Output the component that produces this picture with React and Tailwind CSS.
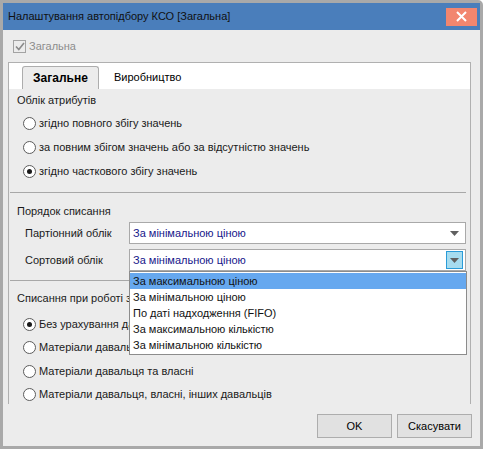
import { useState } from "react"

const Radio = ({ checked, label }) => (
  <div className="flex items-center gap-[3px]">
    <span className="w-[13px] h-[13px] rounded-full border border-[#5c5c5c] bg-white flex items-center justify-center shrink-0">
      {checked && <span className="w-[5px] h-[5px] rounded-full bg-[#1a1a1a]" />}
    </span>
    <span className="whitespace-nowrap">{label}</span>
  </div>
)

const Arrow = () => (
  <svg width="9" height="5" viewBox="0 0 9 5">
    <path d="M0 0 H9 L4.5 5 Z" fill="#606060" />
  </svg>
)

const Select = ({ value, focused, children }) => (
  <div className="relative w-[337px] h-[22px] border border-[#a9a9a9] bg-white flex items-center justify-between pl-[3px] pr-[2px]">
    <span className="text-[#16168a]">{value}</span>
    <span
      className={`w-[17px] h-[18px] flex items-center justify-center ${
        focused ? "bg-[#a6dcef] border border-[#2a9bd8]" : ""
      }`}
    >
      <Arrow />
    </span>
    {children}
  </div>
)

const listItems = [
  "За максимальною ціною",
  "За мінімальною ціною",
  "По даті надходження (FIFO)",
  "За максимальною кількістю",
  "За мінімальною кількістю",
]

export default function App() {
  const [tab, setTab] = useState("general")

  return (
    <div className="w-[487px] h-[451px] bg-white text-[11px] text-[#1a1a1a] font-['Liberation_Sans','Arial',sans-serif]">
      <div className="w-[483px] h-[449px] border-[3px] border-[#a9a9a9] rounded-tr-[5px] bg-[#ececec] flex flex-col">
        {/* Title bar */}
        <div className="h-[27px] shrink-0 bg-[#4a7ebb] flex items-center justify-between pl-[5px] pr-[3px]">
          <span className="text-[#111]">Налаштування автопідбору КСО [Загальна]</span>
          <button className="w-[31px] h-[18px] bg-[#f2866f] flex items-center justify-center">
            <svg width="11" height="11" viewBox="0 0 11 11">
              <path d="M1 1 L10 10 M10 1 L1 10" stroke="white" strokeWidth="2" />
            </svg>
          </button>
        </div>

        <div className="flex-1 flex flex-col px-[5px] pt-[10px]">
          {/* Disabled checkbox */}
          <div className="flex items-center gap-[3px] pl-[5px] h-[13px] text-[#8c8c8c]">
            <span className="w-[13px] h-[13px] border border-[#a3a3a3] flex items-center justify-center">
              <svg width="10" height="9" viewBox="0 0 10 9">
                <path d="M1 4.5 L3.8 7.5 L9 1" stroke="#8a8a8a" strokeWidth="1.6" fill="none" />
              </svg>
            </span>
            <span>Загальна</span>
          </div>

          {/* Tab control */}
          <div className="mt-[9px] w-[463px] h-[342px] border border-[#b0b0b0] flex flex-col">
            <div className="h-[26px] shrink-0 bg-white flex items-end pl-[13px]">
              <button
                onClick={() => setTab("general")}
                className="w-[77px] h-[23px] border border-b-0 border-[#adadad] rounded-t-[3px] bg-[#ececec] font-bold text-black text-[12px]"
              >
                Загальне
              </button>
              <button
                onClick={() => setTab("production")}
                className="ml-[15px] h-[23px] text-black"
              >
                Виробництво
              </button>
            </div>

            <div className="flex-1 bg-[#ececec] pl-[8px] pr-[4px] pt-[3px] flex flex-col">
              <div className="h-[16px] leading-[16px]">Облік атрибутів</div>
              <div className="pl-[6px] mt-[3px]">
                <div className="h-[24px] flex items-center">
                  <Radio label="згідно повного збігу значень" />
                </div>
                <div className="h-[24px] flex items-center">
                  <Radio label="за повним збігом значень або за відсутністю значень" />
                </div>
                <div className="h-[24px] flex items-center">
                  <Radio checked label="згідно часткового збігу значень" />
                </div>
              </div>

              <div className="mt-[9px] -ml-[7px] h-[1px] bg-[#a8a8a8]" />

              <div className="mt-[10px] h-[16px] leading-[16px]">Порядок списання</div>
              <div className="mt-[3px] flex items-center justify-between pl-[8px]">
                <span>Партіонний облік</span>
                <Select value="За мінімальною ціною" />
              </div>
              <div className="mt-[5px] flex items-center justify-between pl-[8px] relative z-10">
                <span>Сортовий облік</span>
                <Select value="За мінімальною ціною" focused>
                  <div className="absolute left-[-1px] top-[21px] w-[338px] border border-[#8c8c8c] bg-white py-[1px]">
                    {listItems.map((item, i) => (
                      <div
                        key={item}
                        className={`h-[16px] leading-[16px] pl-[3px] text-[#111] ${i === 0 ? "bg-[#66a8ef]" : ""}`}
                      >
                        {item}
                      </div>
                    ))}
                  </div>
                </Select>
              </div>

              <div className="mt-[9px] -ml-[7px] h-[1px] bg-[#a8a8a8]" />

              <div className="mt-[9px] h-[16px] leading-[16px] whitespace-nowrap">
                Списання при роботі з давальницькою сировиною
              </div>
              <div className="pl-[6px] mt-[6px]">
                <div className="h-[24px] flex items-center">
                  <Radio checked label="Без урахування давальницької сировини" />
                </div>
                <div className="h-[23px] flex items-center">
                  <Radio label="Матеріали давальця" />
                </div>
                <div className="h-[24px] flex items-center">
                  <Radio label="Матеріали давальця та власні" />
                </div>
                <div className="h-[23px] flex items-center">
                  <Radio label="Матеріали давальця, власні, інших давальців" />
                </div>
              </div>
            </div>
          </div>

          {/* Buttons */}
          <div className="mt-[10px] flex justify-end gap-[5px] pr-[3px]">
            <button className="w-[75px] h-[24px] border border-[#adadad] bg-[#e1e1e1] text-black">OK</button>
            <button className="w-[75px] h-[24px] border border-[#adadad] bg-[#e1e1e1] text-black">Скасувати</button>
          </div>
        </div>
      </div>
    </div>
  )
}
